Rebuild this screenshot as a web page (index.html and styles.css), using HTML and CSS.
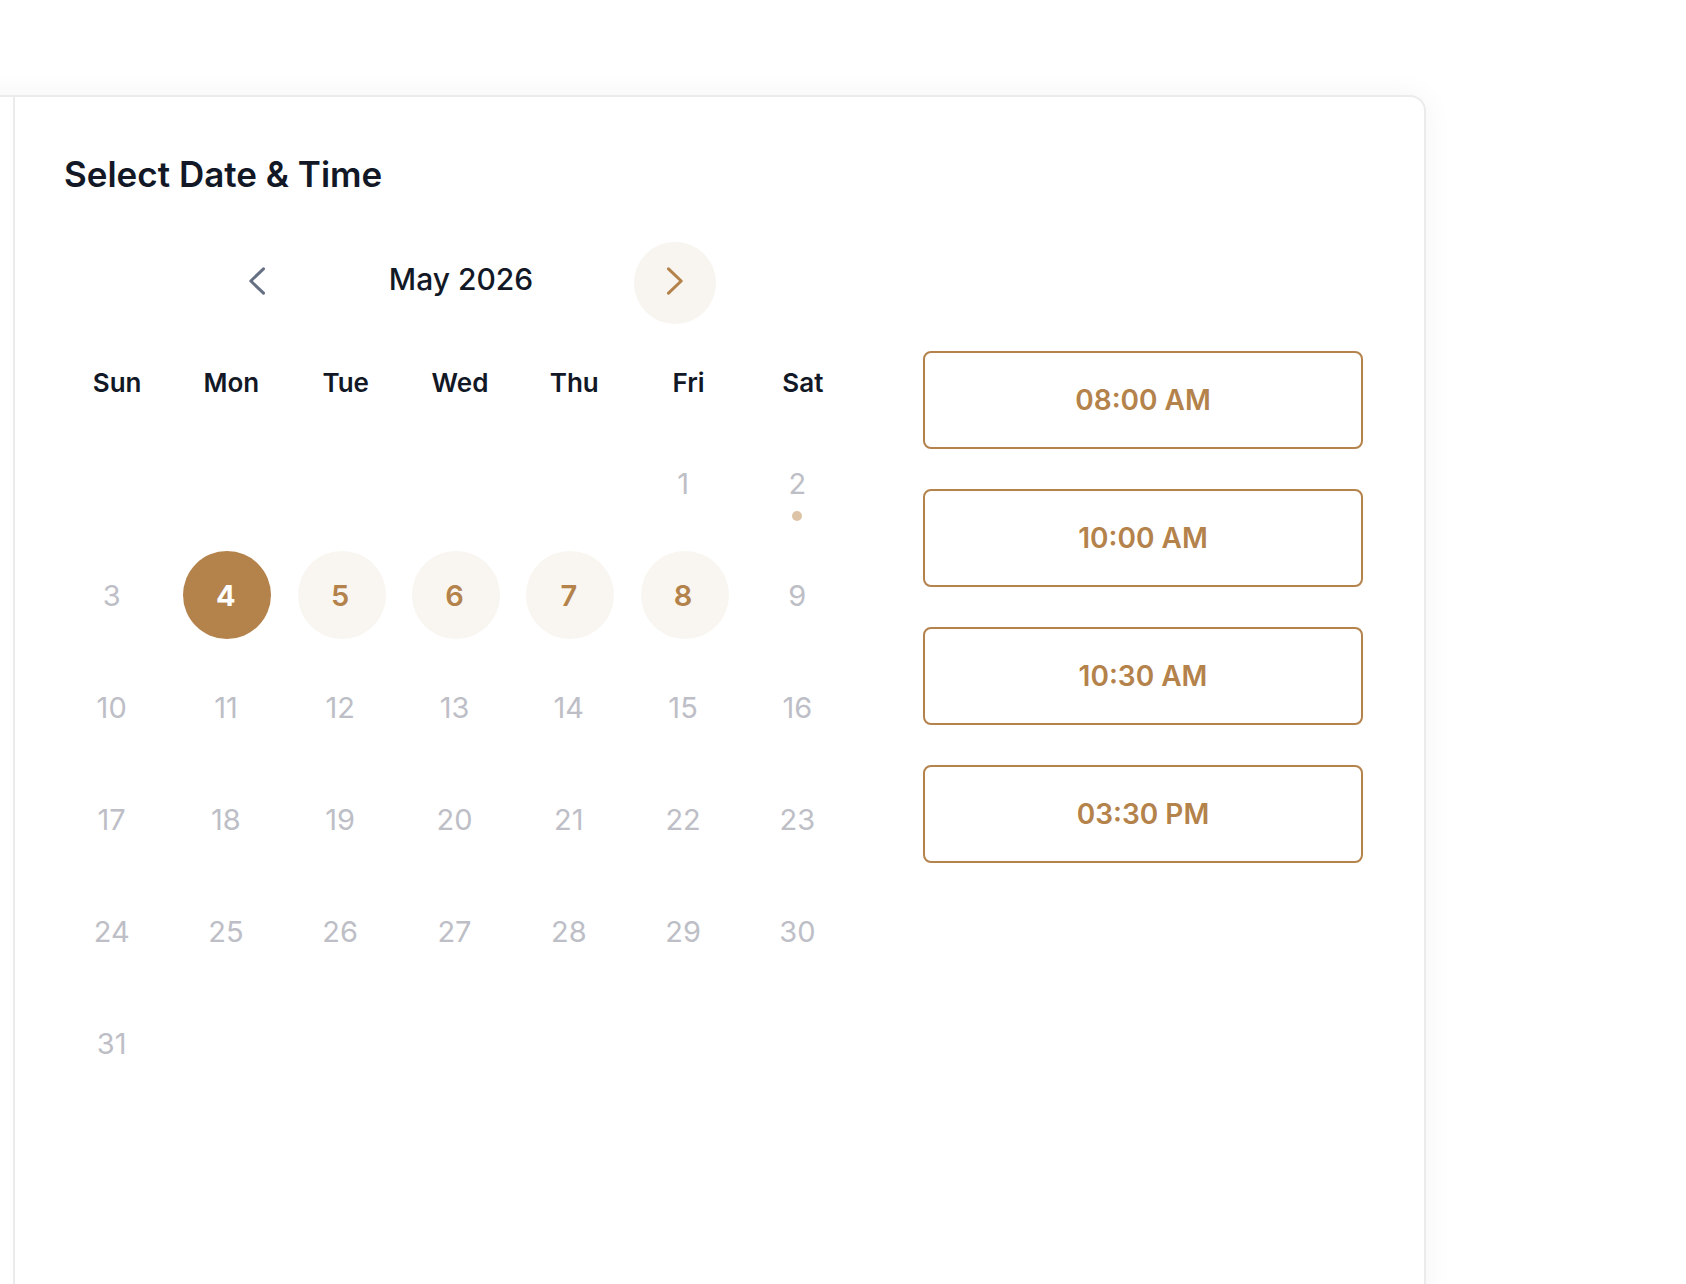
FILE: index.html
```html
<!DOCTYPE html>
<html lang="en">
<head>
<meta charset="utf-8">
<title>Select Date &amp; Time</title>
<link rel="stylesheet" href="styles.css">
</head>
<body>
<div class="page">
  <div class="card">
    <aside class="side"></aside>
    <section class="panel">
      <h1 class="title">Select Date &amp; Time</h1>
      <div class="body">
        <div class="calendar">
          <div class="nav">
            <button class="nav-btn prev" aria-label="Previous month">
              <svg width="18" height="28" viewBox="0 0 18 28" fill="none"><path d="M15.5 1.8 L2.8 14 L15.5 26.2" stroke="currentColor" stroke-width="3" stroke-linecap="round" stroke-linejoin="round"/></svg>
            </button>
            <div class="month">May 2026</div>
            <button class="nav-btn next" aria-label="Next month">
              <svg width="18" height="28" viewBox="0 0 18 28" fill="none"><path d="M2.5 1.8 L15.2 14 L2.5 26.2" stroke="currentColor" stroke-width="3" stroke-linecap="round" stroke-linejoin="round"/></svg>
            </button>
          </div>
          <div class="weekdays">
            <span>Sun</span><span>Mon</span><span>Tue</span><span>Wed</span><span>Thu</span><span>Fri</span><span>Sat</span>
          </div>
          <div class="days">
            <span class="day empty"></span>
            <span class="day empty"></span>
            <span class="day empty"></span>
            <span class="day empty"></span>
            <span class="day empty"></span>
            <span class="day">1</span>
            <span class="day has-dot">2<i class="dot"></i></span>
            <span class="day">3</span>
            <span class="day selected">4</span>
            <span class="day avail">5</span>
            <span class="day avail">6</span>
            <span class="day avail">7</span>
            <span class="day avail">8</span>
            <span class="day">9</span>
            <span class="day">10</span>
            <span class="day">11</span>
            <span class="day">12</span>
            <span class="day">13</span>
            <span class="day">14</span>
            <span class="day">15</span>
            <span class="day">16</span>
            <span class="day">17</span>
            <span class="day">18</span>
            <span class="day">19</span>
            <span class="day">20</span>
            <span class="day">21</span>
            <span class="day">22</span>
            <span class="day">23</span>
            <span class="day">24</span>
            <span class="day">25</span>
            <span class="day">26</span>
            <span class="day">27</span>
            <span class="day">28</span>
            <span class="day">29</span>
            <span class="day">30</span>
            <span class="day">31</span>
          </div>
        </div>
        <div class="times">
          <button class="slot">08:00 AM</button>
          <button class="slot">10:00 AM</button>
          <button class="slot">10:30 AM</button>
          <button class="slot">03:30 PM</button>
        </div>
      </div>
    </section>
  </div>
</div>
</body>
</html>
```

FILE: styles.css
```css
html, body {
  margin: 0;
  padding: 0;
  height: 100%;
  overflow: hidden;
  background: #ffffff;
}

body {
  font-family: Inter, "Noto Sans", "Liberation Sans", sans-serif;
  color: #121826;
}

.page {
  padding-top: 95px;
}

.card {
  display: flex;
  margin-left: -40px;
  width: 1466px;
  height: 1260px;
  box-sizing: border-box;
  background: #ffffff;
  border: 2px solid #ebebeb;
  border-radius: 16px;
  box-shadow: 0 0 30px rgba(0, 0, 0, 0.05);
}

.side {
  width: 51px;
  flex: none;
  border-right: 2px solid #ebebeb;
}

.panel {
  flex: 1;
  padding: 56px 60px 0 49px;
}

.title {
  margin: 0;
  font-size: 35px;
  line-height: 42px;
  font-weight: 600;
  color: #121826;
}

.body {
  display: flex;
  align-items: flex-start;
  margin-top: 47px;
  margin-left: 2px;
}

.calendar {
  width: 800px;
  margin-left: -10px;
  flex: none;
}

.nav {
  display: flex;
  align-items: center;
  padding-left: 160px;
  height: 82px;
}

.nav-btn {
  width: 82px;
  height: 82px;
  border: none;
  border-radius: 50%;
  background: transparent;
  display: flex;
  align-items: center;
  justify-content: center;
  padding: 0 0 4px 0;
}

.nav-btn.prev {
  color: #667085;
}

.nav-btn.next {
  color: #b4824b;
  background: #f8f5f0;
}

.month {
  width: 336px;
  text-align: center;
  font-size: 30px;
  font-weight: 500;
  color: #121826;
  padding: 0 10px 8px 0;
  box-sizing: border-box;
}

.weekdays {
  display: grid;
  grid-template-columns: repeat(7, 1fr);
  margin-top: 43px;
  margin-left: 4px;
  margin-right: -4px;
  height: 32px;
  line-height: 32px;
  font-size: 26px;
  font-weight: 600;
  text-align: center;
  color: #121826;
}

.days {
  display: grid;
  grid-template-columns: repeat(7, 1fr);
  grid-auto-rows: 88px;
  row-gap: 24px;
  margin-top: 40px;
  justify-items: center;
}

.day {
  position: relative;
  width: 88px;
  height: 88px;
  border-radius: 50%;
  display: flex;
  align-items: center;
  justify-content: center;
  padding-right: 3px;
  box-sizing: border-box;
  font-size: 29px;
  font-weight: 400;
  color: #bdbec6;
}

.day.avail {
  background: #f9f6f1;
  color: #b4824b;
  font-weight: 600;
}

.day.selected {
  background: #b4824b;
  color: #ffffff;
  font-weight: 700;
}

.dot {
  position: absolute;
  left: 37px;
  bottom: 6px;
  width: 10px;
  height: 10px;
  border-radius: 50%;
  background: #dec4a6;
}

.times {
  margin-left: 67px;
  padding-top: 109px;
  display: flex;
  flex-direction: column;
  gap: 40px;
  width: 440px;
  flex: none;
}

.slot {
  height: 98px;
  width: 100%;
  box-sizing: border-box;
  background: #ffffff;
  border: 2px solid #b4824b;
  border-radius: 8px;
  font-family: Inter, "Noto Sans", "Liberation Sans", sans-serif;
  font-size: 28px;
  font-weight: 600;
  color: #b4824b;
  padding: 0;
}
```
